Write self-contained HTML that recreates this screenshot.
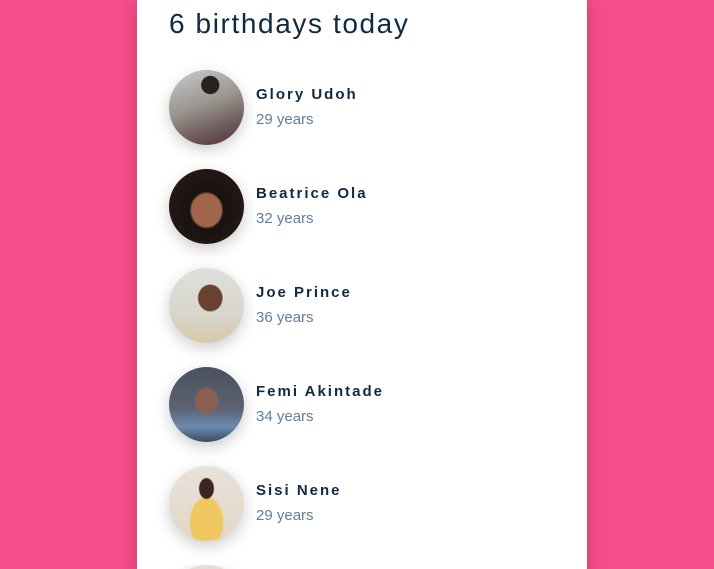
<!DOCTYPE html>
<html style="height:569px;overflow:hidden"><head><style>
body{margin:0;width:714px;height:569px;background:#f64c89;overflow:hidden;font-family:"Liberation Sans",sans-serif;position:relative;}
.card{position:absolute;left:137px;top:0;width:450px;height:569px;background:#fff;box-shadow:0 5px 15px rgba(0,0,0,.2);overflow:hidden;}
h3{position:absolute;left:32px;top:8px;margin:0;font-size:28px;font-weight:400;letter-spacing:1.6px;color:#102a42;}
.p{position:absolute;left:32px;width:75px;height:75px;}
.a{width:75px;height:75px;border-radius:50%;box-shadow:0 5px 15px rgba(0,0,0,.2);}
.n{position:absolute;left:87px;top:16px;font-size:15px;font-weight:700;letter-spacing:2px;color:#102a42;white-space:nowrap;}
.y{position:absolute;left:87px;top:41px;font-size:15px;color:#617d98;white-space:nowrap;}
</style></head><body>
<div class="card">
<h3>6 birthdays today</h3>
<div class="p" style="top:70px"><div class="a" style="background:radial-gradient(circle at 55% 20%,#2a211d 0 12%,transparent 13%),linear-gradient(160deg,#c9ccd0 0%,#9a9690 45%,#6c5a5a 75%,#5a2a3a 100%)"></div><div class="n">Glory Udoh</div><div class="y">29 years</div></div>
<div class="p" style="top:169px"><div class="a" style="background:radial-gradient(ellipse at 50% 55%,#a0654a 0 28%,#1a1210 32%,#2a1c18 100%)"></div><div class="n">Beatrice Ola</div><div class="y">32 years</div></div>
<div class="p" style="top:268px"><div class="a" style="background:radial-gradient(ellipse at 55% 40%,#6a4030 0 20%,transparent 22%),linear-gradient(180deg,#dfe0dc 0%,#d8d6cc 60%,#d9c8a8 100%)"></div><div class="n">Joe Prince</div><div class="y">36 years</div></div>
<div class="p" style="top:367px"><div class="a" style="background:radial-gradient(ellipse at 50% 45%,#8a6050 0 20%,transparent 24%),linear-gradient(180deg,#4a5060 0%,#5b6272 55%,#6a8cb0 80%,#3a4a60 100%)"></div><div class="n">Femi Akintade</div><div class="y">34 years</div></div>
<div class="p" style="top:466px"><div class="a" style="background:radial-gradient(ellipse at 50% 30%,#3a2620 0 13%,transparent 15%),radial-gradient(ellipse at 50% 75%,#efc860 0 30%,transparent 33%),linear-gradient(180deg,#e9e2da,#e2d6c8)"></div><div class="n">Sisi Nene</div><div class="y">29 years</div></div>
<div class="p" style="top:565px;height:4px;overflow:hidden"><div class="a" style="background:#e6ddd4"></div></div>
</div>
</body></html>
